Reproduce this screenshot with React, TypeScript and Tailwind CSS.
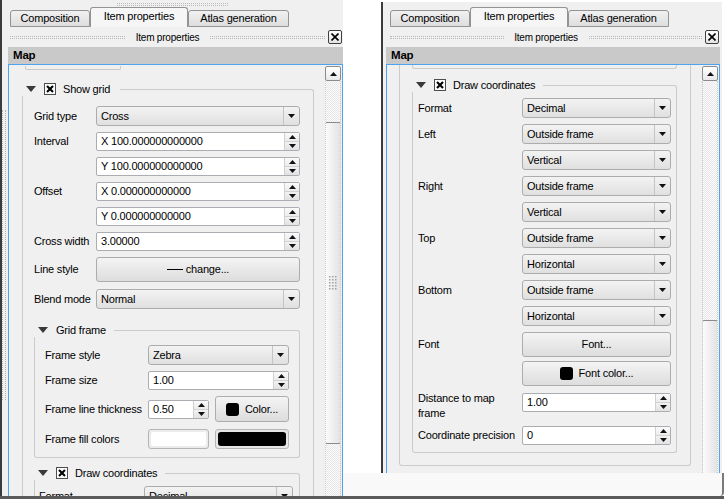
import React from "react";

type Kids = { children?: React.ReactNode; className?: string };

function Tri() {
  return (
    <svg width="10" height="6" viewBox="0 0 10 6" className="shrink-0">
      <path d="M0 0H10L5 6Z" fill="#3a3a3a" />
    </svg>
  );
}

function Check() {
  return (
    <div className="w-[12px] h-[12px] shrink-0 border border-[#4d4d4d] bg-[#fbfbfb] flex items-center justify-center">
      <svg width="8" height="8" viewBox="0 0 8 8">
        <path d="M1 1L7 7M7 1L1 7" stroke="#000" strokeWidth="2.1" />
      </svg>
    </div>
  );
}

function DownArrow() {
  return (
    <svg width="7" height="4" viewBox="0 0 7 4" className="shrink-0">
      <path d="M0 0H7L3.5 4Z" fill="#111" />
    </svg>
  );
}

function UpArrow() {
  return (
    <svg width="7" height="4" viewBox="0 0 7 4" className="shrink-0">
      <path d="M0 4H7L3.5 0Z" fill="#111" />
    </svg>
  );
}

function Combo({ value, className = "" }: { value: string; className?: string }) {
  return (
    <div
      className={`h-[20px] rounded-[3px] border border-[#acacac] bg-linear-to-b from-[#f3f3f3] to-[#e0e0e0] flex items-stretch ${className}`}
    >
      <div className="flex-1 pl-[4px] flex items-center whitespace-nowrap overflow-hidden">{value}</div>
      <div className="w-[16px] border-l border-[#c4c4c4] flex items-center justify-center">
        <DownArrow />
      </div>
    </div>
  );
}

function Spin({ value, className = "" }: { value: string; className?: string }) {
  return (
    <div className={`h-[19px] border border-[#abadb3] rounded-[2px] bg-white flex items-stretch ${className}`}>
      <div className="flex-1 pl-[4px] flex items-center whitespace-nowrap overflow-hidden">{value}</div>
      <div className="w-[15px] flex flex-col border-l border-[#d0d0d0]">
        <div className="flex-1 flex items-center justify-center bg-linear-to-b from-[#fafafa] to-[#ececec]">
          <UpArrow />
        </div>
        <div className="flex-1 flex items-center justify-center bg-linear-to-b from-[#f2f2f2] to-[#e2e2e2] border-t border-[#d2d2d2]">
          <DownArrow />
        </div>
      </div>
    </div>
  );
}

function Btn({ children, className = "" }: Kids) {
  return (
    <div
      className={`rounded-[3px] border border-[#acacac] bg-linear-to-b from-[#f4f4f4] to-[#dddddd] flex items-center justify-center whitespace-nowrap ${className}`}
    >
      {children}
    </div>
  );
}

function Sw() {
  return <span className="w-[13px] h-[13px] rounded-[3px] bg-black mr-[6px] shrink-0" />;
}

function Row({
  label,
  lw = "w-[62px]",
  h = "h-[20px]",
  className = "",
  children,
}: {
  label: React.ReactNode;
  lw?: string;
  h?: string;
  className?: string;
  children?: React.ReactNode;
}) {
  return (
    <div className={`flex ${className}`}>
      <div className={`${lw} ${h} shrink-0 flex items-center whitespace-nowrap`}>{label}</div>
      <div className="flex-1 min-w-0">{children}</div>
    </div>
  );
}

function Group({
  title,
  check = false,
  className = "",
  bodyClass = "",
  lineGap = "ml-[8px]",
  children,
}: {
  title: string;
  check?: boolean;
  className?: string;
  bodyClass?: string;
  lineGap?: string;
  children?: React.ReactNode;
}) {
  return (
    <div className={className}>
      <div className="flex h-[14px]">
        <div className="flex items-center pl-[4px] whitespace-nowrap">
          <Tri />
          {check && (
            <div className="ml-[8px]">
              <Check />
            </div>
          )}
          <span className={check ? "ml-[7px]" : "ml-[8px]"}>{title}</span>
        </div>
        <div className={`flex-1 mt-[7px] border-t border-r border-[#cbcbcb] rounded-tr-[3px] ${lineGap}`} />
      </div>
      <div className={`border-x border-b border-[#cbcbcb] rounded-b-[3px] ${bodyClass}`}>{children}</div>
    </div>
  );
}

function Grip() {
  const dots: React.ReactNode[] = [];
  for (let r = 0; r < 5; r++) {
    for (let c = 0; c < 3; c++) {
      dots.push(<rect key={`${r}-${c}`} x={c * 3} y={r * 3} width="1.5" height="1.5" fill="#a0a0a0" />);
    }
  }
  return (
    <svg width="8" height="14" viewBox="0 0 8 14">
      {dots}
    </svg>
  );
}

function ScrollBar({ thumbClass }: { thumbClass: string }) {
  return (
    <div className="w-[16px] shrink-0 flex flex-col pt-[1px] mr-[1px]">
      <div className="h-[15px] shrink-0 rounded-[2px] border border-[#8c8c8c] bg-linear-to-b from-white to-[#e9e9e9] flex items-center justify-center">
        <UpArrow />
      </div>
      <div className="flex-1 border-x border-dotted border-[#c9c9c9] bg-[image:repeating-conic-gradient(#e8e8e8_0_25%,#fbfbfb_0_50%)] bg-[length:2px_2px] overflow-hidden">
        <div
          className={`-mx-[1px] rounded-[2px] border border-[#8a8a8a] bg-linear-to-r from-[#fbfbfb] to-[#e3e3e3] flex items-center justify-center ${thumbClass}`}
        >
          <Grip />
        </div>
      </div>
    </div>
  );
}

function CloseBtn() {
  return (
    <div className="w-[14px] h-[14px] shrink-0 border border-[#3f3f3f] rounded-[2px] bg-linear-to-b from-white to-[#e4e4e4] flex items-center justify-center">
      <svg width="8" height="8" viewBox="0 0 8 8">
        <path d="M0.5 0.5L7.5 7.5M7.5 0.5L0.5 7.5" stroke="#000" strokeWidth="1.6" />
      </svg>
    </div>
  );
}

function Tabs({ pl }: { pl: string }) {
  const tab =
    "h-[17px] border border-[#939393] rounded-t-[3px] bg-linear-to-b from-[#f1f1f1] to-[#dedede] flex items-center justify-center whitespace-nowrap";
  return (
    <div className={`flex items-end h-[20px] shrink-0 ${pl}`}>
      <div className={`w-[80px] ${tab}`}>Composition</div>
      <div className="w-[98px] h-[20px] border border-b-0 border-[#939393] rounded-t-[3px] bg-[#f6f6f6] flex items-center justify-center whitespace-nowrap pb-[2px]">
        Item properties
      </div>
      <div className={`w-[101px] ${tab}`}>Atlas generation</div>
    </div>
  );
}

function DockTitle({ pl }: { pl: string }) {
  const dots = "flex-1 h-[3px] border-y border-dotted border-[#b9b9b9]";
  return (
    <div className={`flex items-center h-[20px] shrink-0 pr-[1px] ${pl}`}>
      <div className={dots} />
      <div className="w-[85px] text-center text-[10px] whitespace-nowrap">Item properties</div>
      <div className={dots} />
      <div className="ml-[3px]">
        <CloseBtn />
      </div>
    </div>
  );
}

function MapHeader() {
  return (
    <div className="h-[17px] shrink-0 bg-[#c9c9c9] pl-[5px] flex items-center font-bold text-[11.5px]">Map</div>
  );
}

function LeftContent() {
  return (
    <div className="flex-1 min-w-0 pt-[1px]">
      <div className="ml-[16px] w-[96px] h-[4px] border-x border-b border-[#c9c9c9] rounded-b-[2px]" />
      <Group
        className="ml-[13px] mr-[11px] mt-[12px]"
        title="Show grid"
        check
        lineGap="ml-[10px]"
        bodyClass="pl-[11px] pr-[13px] pt-[10px] pb-[20px]"
      >
        <Row label="Grid type">
          <Combo value="Cross" />
        </Row>
        <Row label="Interval" h="h-[19px]" className="mt-[6px]">
          <Spin value="X 100.000000000000" />
          <Spin value="Y 100.000000000000" className="mt-[6px]" />
        </Row>
        <Row label="Offset" h="h-[19px]" className="mt-[6px]">
          <Spin value="X 0.000000000000" />
          <Spin value="Y 0.000000000000" className="mt-[6px]" />
        </Row>
        <Row label="Cross width" h="h-[19px]" className="mt-[6px]">
          <Spin value="3.00000" />
        </Row>
        <Row label="Line style" h="h-[25px]" className="mt-[6px]">
          <Btn className="h-[25px]">
            <span className="w-[16px] border-t border-black mr-[3px]" />
            change...
          </Btn>
        </Row>
        <Row label="Blend mode" className="mt-[7px]">
          <Combo value="Normal" />
        </Row>
        <Group className="mt-[14px]" title="Grid frame" bodyClass="pl-[10px] pr-[10px] pt-[8px] pb-[8px]">
          <Row label="Frame style" lw="w-[103px]">
            <Combo value="Zebra" />
          </Row>
          <Row label="Frame size" lw="w-[103px]" h="h-[19px]" className="mt-[6px]">
            <Spin value="1.00" />
          </Row>
          <Row label="Frame line thickness" lw="w-[103px]" h="h-[26px]" className="mt-[6px]">
            <div className="flex items-center h-[26px]">
              <Spin value="0.50" className="w-[61px] shrink-0" />
              <Btn className="ml-[6px] flex-1 h-[26px]">
                <Sw />
                Color...
              </Btn>
            </div>
          </Row>
          <Row label="Frame fill colors" lw="w-[103px]" className="mt-[7px]">
            <div className="flex h-[20px]">
              <div className="w-[61px] shrink-0 rounded-[3px] border border-[#b5b5b5] bg-[#ececec] p-[2px]">
                <div className="w-full h-full rounded-[2px] bg-white" />
              </div>
              <div className="ml-[6px] flex-1 rounded-[3px] border border-[#b5b5b5] bg-[#e6e6e6] p-[2px]">
                <div className="w-full h-full rounded-[3px] bg-black" />
              </div>
            </div>
          </Row>
        </Group>
        <Group
          className="mt-[8px]"
          title="Draw coordinates"
          check
          bodyClass="pl-[4px] pr-[6px] pt-[6px] pb-[8px]"
        >
          <Row label="Format" lw="w-[105px]">
            <Combo value="Decimal" />
          </Row>
          <Row label="Left" lw="w-[105px]" className="mt-[6px]">
            <Combo value="Outside frame" />
          </Row>
        </Group>
      </Group>
    </div>
  );
}

function RightContent() {
  const lw = "w-[104px]";
  return (
    <div className="flex-1 min-w-0">
      <div className="ml-[12px] mr-[11px] border-x border-b border-[#cbcbcb] rounded-b-[3px] pl-[12px] pr-[13px] pb-[12px]">
        <div className="h-[4px] border-x border-b border-[#cbcbcb] rounded-b-[3px]" />
        <Group
          className="mt-[9px]"
          title="Draw coordinates"
          check
          bodyClass="pl-[5px] pr-[5px] pt-[6px] pb-[7px]"
        >
          <Row label="Format" lw={lw}>
            <Combo value="Decimal" />
          </Row>
          <Row label="Left" lw={lw} className="mt-[6px]">
            <Combo value="Outside frame" />
          </Row>
          <Row label="" lw={lw} className="mt-[6px]">
            <Combo value="Vertical" />
          </Row>
          <Row label="Right" lw={lw} className="mt-[6px]">
            <Combo value="Outside frame" />
          </Row>
          <Row label="" lw={lw} className="mt-[6px]">
            <Combo value="Vertical" />
          </Row>
          <Row label="Top" lw={lw} className="mt-[6px]">
            <Combo value="Outside frame" />
          </Row>
          <Row label="" lw={lw} className="mt-[6px]">
            <Combo value="Horizontal" />
          </Row>
          <Row label="Bottom" lw={lw} className="mt-[6px]">
            <Combo value="Outside frame" />
          </Row>
          <Row label="" lw={lw} className="mt-[6px]">
            <Combo value="Horizontal" />
          </Row>
          <Row label="Font" lw={lw} h="h-[25px]" className="mt-[6px]">
            <Btn className="h-[25px]">Font...</Btn>
          </Row>
          <Row label="" lw={lw} h="h-[25px]" className="mt-[4px]">
            <Btn className="h-[25px]">
              <Sw />
              Font color...
            </Btn>
          </Row>
          <div className="flex mt-[5px]">
            <div className={`${lw} shrink-0 leading-[15px]`}>
              Distance to map
              <br />
              frame
            </div>
            <div className="flex-1 min-w-0 pt-[2px]">
              <Spin value="1.00" />
            </div>
          </div>
          <Row label="Coordinate precision" lw={lw} h="h-[19px]" className="mt-[5px]">
            <Spin value="0" />
          </Row>
        </Group>
      </div>
    </div>
  );
}

function LeftPanel() {
  return (
    <div className="w-[343px] h-[496px] shrink-0 bg-[#f0f0f0] border-l-2 border-[#3b3b3b] flex">
      <div className="w-[6px] shrink-0 pt-[110px]">
        <div className="w-[4px] h-[290px] border-x border-dotted border-[#b5b5b5]" />
      </div>
      <div className="flex-1 min-w-0 flex flex-col">
        <div className="h-[7px] shrink-0 pt-[3px]">
          <div className="ml-[109px] w-[111px] h-[3px] border-y border-dotted border-[#b9b9b9]" />
        </div>
        <Tabs pl="pl-[2px]" />
        <DockTitle pl="pl-[2px]" />
        <MapHeader />
        <div className="flex-1 min-h-0 border border-b-0 border-[#4ea3ef] flex overflow-hidden">
          <LeftContent />
          <ScrollBar thumbClass="mt-[41px] h-[322px]" />
        </div>
      </div>
    </div>
  );
}

function RightPanel() {
  return (
    <div className="w-[341px] h-[471px] shrink-0 bg-[#f0f0f0] border-l-2 border-[#3b3b3b] flex pr-[2px]">
      <div className="w-[3px] shrink-0" />
      <div className="flex-1 min-w-0 flex flex-col">
        <div className="h-[5px] shrink-0" />
        <Tabs pl="pl-[4px]" />
        <DockTitle pl="pl-[4px]" />
        <MapHeader />
        <div className="flex-1 min-h-0 border border-b-0 border-[#4ea3ef] flex overflow-hidden">
          <RightContent />
          <ScrollBar thumbClass="mt-[239px] h-[322px]" />
        </div>
      </div>
    </div>
  );
}

export default function App() {
  return (
    <div className="w-[724px] h-[499px] bg-white flex flex-col overflow-hidden font-['Liberation_Sans',Arial,sans-serif] text-[11px] tracking-[-0.2px] text-black">
      <div className="flex h-[496px] shrink-0">
        <LeftPanel />
        <div className="flex-1 min-w-0 flex flex-col">
          <div className="flex h-[473px] shrink-0 pt-[2px]">
            <div className="w-[38px] shrink-0" />
            <RightPanel />
          </div>
          <div className="flex-1 bg-[#f9f9f9] border-r-2 border-[#7a7a7a] rounded-br-[4px]" />
        </div>
      </div>
      <div className="h-[3px] shrink-0 bg-[#5a5a5a]" />
    </div>
  );
}
